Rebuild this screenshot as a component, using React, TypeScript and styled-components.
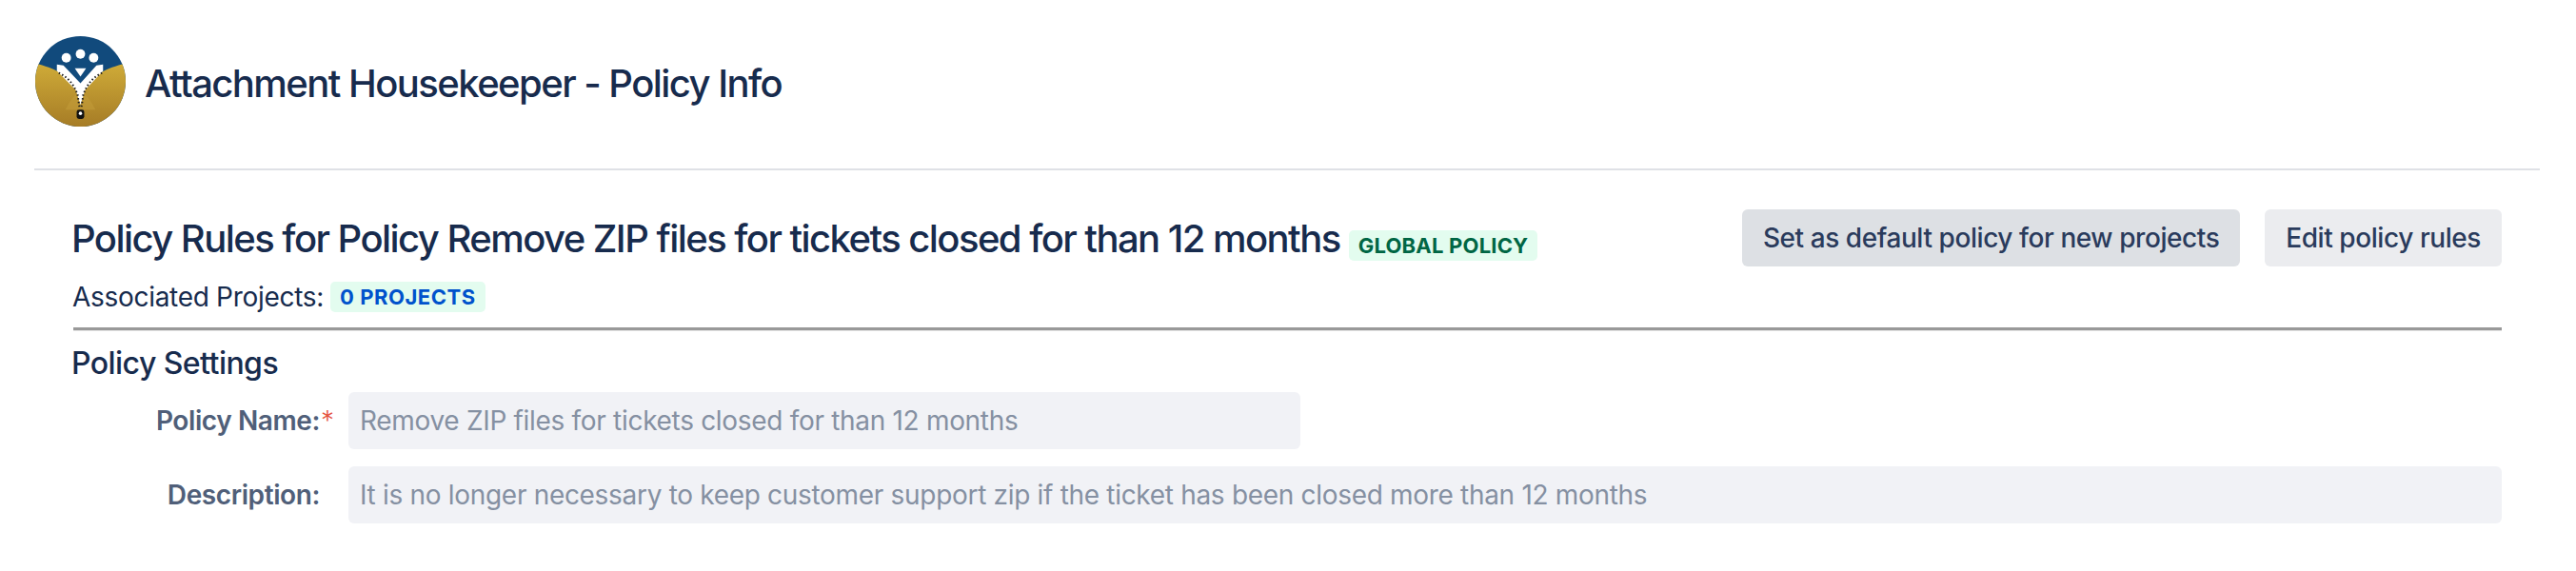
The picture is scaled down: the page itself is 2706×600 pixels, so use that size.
import styled, { createGlobalStyle } from 'styled-components';

const GlobalStyle = createGlobalStyle`
  html, body {
    margin: 0;
    padding: 0;
    background: #fff;
    font-family: Inter, "Liberation Sans", sans-serif;
    color: #172b4d;
  }
`;

const Logo = () => (
  <LogoSvg viewBox="0 0 96 96" aria-hidden="true">
    <defs>
      <linearGradient id="gold" x1="0" y1="0" x2="0" y2="1">
        <stop offset="0" stopColor="#cfab38" />
        <stop offset="1" stopColor="#a67c26" />
      </linearGradient>
      <clipPath id="disc">
        <circle cx="48" cy="48" r="48" />
      </clipPath>
    </defs>
    <g clipPath="url(#disc)">
      <rect width="96" height="96" fill="#114a7c" />
      <path
        d="M0 29 C 10 31 20 35 25 38 C 35 43 42 52 46 62 L48 74 L50 62 C 54 52 61 43 71 38 C 76 35 86 31 96 29 V96 H0 Z"
        fill="url(#gold)"
      />
      <path d="M32 78 C 36 70 40 64 46 60 H50 C 56 64 60 70 64 78 Z" fill="#c39c3a" opacity="0.55" />
    </g>
    <circle cx="33" cy="23" r="5" fill="#fff" />
    <circle cx="48" cy="19" r="5" fill="#fff" />
    <circle cx="62" cy="23" r="5" fill="#fff" />
    <path d="M23 30 L30 31 L48 50 L65 31 L72 30 L72 37 L53 57 L48 73 L43 57 L23 37 Z" fill="#fff" />
    <path d="M42 34 H54 L48 43 Z" fill="#fff" />
    <path d="M25 39 C 34 43 41 51 45 62 L47 76" fill="none" stroke="#1a1a1a" strokeWidth="2" strokeDasharray="1.5 2.4" />
    <path d="M71 39 C 62 43 55 51 51 62 L49 76" fill="none" stroke="#1a1a1a" strokeWidth="2" strokeDasharray="1.5 2.4" />
    <rect x="44" y="78" width="8" height="10" rx="2.5" fill="#111" />
    <circle cx="48" cy="82" r="1.8" fill="#fff" />
  </LogoSvg>
);

const App = () => (
  <>
    <GlobalStyle />
    <Page>
      <Header>
        <Logo />
        <PageTitle>Attachment Housekeeper - Policy Info</PageTitle>
      </Header>
      <Content>
        <TopRow>
          <div>
            <PolicyTitleLine>
              <PolicyTitle>Policy Rules for Policy Remove ZIP files for tickets closed for than 12 months</PolicyTitle>
              <TitleLozenge $tone="green">Global Policy</TitleLozenge>
            </PolicyTitleLine>
            <Associated>
              <AssociatedLabel>Associated Projects:</AssociatedLabel>
              <Lozenge $tone="blue">0 Projects</Lozenge>
            </Associated>
          </div>
          <Actions>
            <ActionButton $strong>Set as default policy for new projects</ActionButton>
            <ActionButton>Edit policy rules</ActionButton>
          </Actions>
        </TopRow>
        <Rule />
        <SectionTitle>Policy Settings</SectionTitle>
        <Field>
          <FieldLabel>
            Policy Name:<Required>*</Required>
          </FieldLabel>
          <ReadOnlyInput $width="1000px">Remove ZIP files for tickets closed for than 12 months</ReadOnlyInput>
        </Field>
        <Field>
          <FieldLabel>Description:</FieldLabel>
          <ReadOnlyInput>It is no longer necessary to keep customer support zip if the ticket has been closed more than 12 months</ReadOnlyInput>
        </Field>
      </Content>
    </Page>
  </>
);

export default App;

// region STYLES

const Page = styled.div`
  width: 2706px;
  height: 600px;
  overflow: hidden;
  box-sizing: border-box;
  padding: 38px 38px 0 36px;
`;

const Header = styled.header`
  display: flex;
  align-items: center;
  gap: 20px;
  height: 141px;
  box-sizing: border-box;
  padding-bottom: 45px;
  border-bottom: 2px solid #dfe1e6;
`;

const LogoSvg = styled.svg`
  width: 95px;
  height: 95px;
  margin: 1px 0 0 1px;
  flex: none;
`;

const PageTitle = styled.h1`
  margin: 5px 0 0;
  font-size: 40px;
  line-height: 44px;
  font-weight: 500;
  letter-spacing: -1.55px;
`;

const Content = styled.main`
  padding: 41px 40px 0 41px;
`;

const TopRow = styled.div`
  display: flex;
  justify-content: space-between;
  align-items: flex-start;
  height: 124px;
`;

const PolicyTitleLine = styled.div`
  display: flex;
  align-items: center;
  gap: 9px;
  height: 62px;
`;

const PolicyTitle = styled.h2`
  margin: 0 0 0 -2px;
  font-size: 40px;
  line-height: 48px;
  font-weight: 500;
  letter-spacing: -1.55px;
`;

const Lozenge = styled.span<{ $tone: 'green' | 'blue' }>`
  display: inline-block;
  padding: 0 10px;
  height: 32px;
  line-height: 32px;
  border-radius: 5px;
  background: #e3fcef;
  color: ${(p) => (p.$tone === 'green' ? '#006644' : '#0052cc')};
  font-size: 22px;
  font-weight: 700;
  letter-spacing: ${(p) => (p.$tone === 'green' ? '0.2px' : '0.55px')};
  text-transform: uppercase;
  white-space: nowrap;
`;

const TitleLozenge = styled(Lozenge)`
  margin-top: 14px;
`;

const Associated = styled.div`
  display: flex;
  align-items: center;
  gap: 7px;
  margin-top: 14px;
  font-size: 28px;
  line-height: 32px;
  letter-spacing: -0.3px;
`;

const AssociatedLabel = styled.span`
  margin-left: -1px;
`;

const Actions = styled.div`
  display: flex;
  gap: 26px;
`;

const ActionButton = styled.button<{ $strong?: boolean }>`
  height: 60px;
  padding: 0 22px;
  border: 0;
  border-radius: 6px;
  background: ${(p) => (p.$strong ? '#dde0e4' : '#ebecef')};
  color: #2a3b5c;
  font: 500 28px Inter, "Liberation Sans", sans-serif;
  letter-spacing: -0.43px;
  white-space: nowrap;
`;

const Rule = styled.hr`
  margin: 0;
  border: 0;
  border-top: 3px solid #999;
  box-shadow: 0 1px 0 #e4e4e4;
`;

const SectionTitle = styled.h3`
  margin: 17px 0 12px -2px;
  font-size: 32px;
  line-height: 36px;
  font-weight: 500;
  letter-spacing: -0.55px;
`;

const Field = styled.div`
  display: flex;
  align-items: center;
  margin-bottom: 18px;
`;

const FieldLabel = styled.label`
  position: relative;
  width: 259px;
  margin-right: 30px;
  flex: none;
  text-align: right;
  font-size: 28px;
  font-weight: 600;
  letter-spacing: -0.4px;
  color: #505f79;
`;

const Required = styled.span`
  position: absolute;
  left: 100%;
  top: 0;
  margin-left: 1px;
  color: #e5533d;
  font-weight: 300;
`;

const ReadOnlyInput = styled.div<{ $width?: string }>`
  flex: ${(p) => (p.$width ? 'none' : '1')};
  width: ${(p) => p.$width || 'auto'};
  height: 60px;
  box-sizing: border-box;
  padding: 0 12px;
  border-radius: 6px;
  background: #f1f2f6;
  color: #8590a2;
  font-size: 28px;
  letter-spacing: -0.31px;
  line-height: 60px;
`;

// endregion
